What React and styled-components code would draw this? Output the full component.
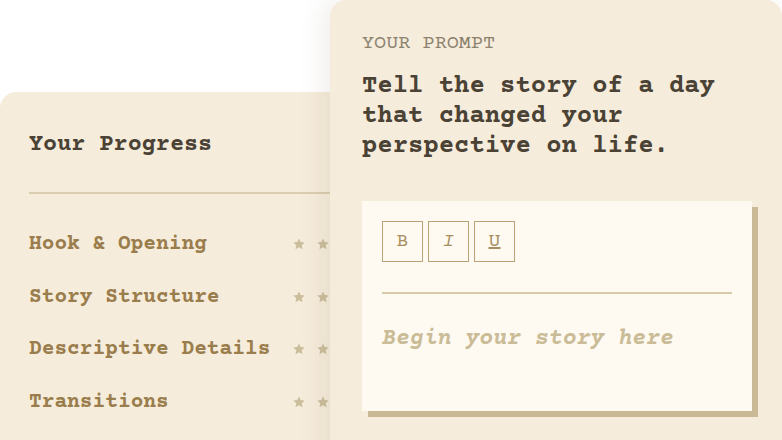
import styled, { createGlobalStyle } from "styled-components";

const GlobalStyle = createGlobalStyle`
  html, body {
    margin: 0;
    padding: 0;
    background: #ffffff;
  }
  body {
    font-family: "Courier Prime", "Courier New", FreeMono, monospace;
    overflow: hidden;
  }
`;

const Stage = styled.div`
  width: 782px;
  height: 440px;
  display: grid;
  grid-template-columns: 330px 452px;
  overflow: hidden;
  background: #ffffff;
`;

const ProgressCard = styled.aside`
  margin-top: 92px;
  width: 420px;
  height: 400px;
  background: #f6ecdb;
  border-radius: 16px 0 0 0;
  padding: 33px 0 0 29px;
  box-sizing: border-box;
`;

const CardTitle = styled.h2`
  margin: 0;
  font-size: 23.5px;
  font-weight: 700;
  color: #4a4235;
  line-height: 40px;
`;

const Divider = styled.div`
  height: 2px;
  background: ${p => p.$color || "#dacdb0"};
  margin: ${p => p.$margin || "0"};
`;

const SkillList = styled.ul`
  list-style: none;
  margin: 0;
  padding: 0;
`;

const SkillRow = styled.li`
  display: grid;
  grid-template-columns: 263px auto;
  align-items: center;
  height: 52.5px;
`;

const SkillName = styled.span`
  font-size: 21.2px;
  font-weight: 700;
  color: #9a7d4c;
`;

const Stars = styled.span`
  display: flex;
  gap: 10px;
  color: #cbbe9c;
`;

const PromptCard = styled.section`
  position: relative;
  z-index: 1;
  background: #f6ecdb;
  border-radius: 16px 16px 0 0;
  padding: 34px 31px 0 32px;
  box-shadow: -6px 0 26px rgba(110, 95, 60, 0.11);
`;

const Label = styled.div`
  font-size: 20.2px;
  color: #8c826f;
  line-height: 20px;
`;

const PromptText = styled.p`
  margin: 18px 0 0;
  font-size: 25.6px;
  font-weight: 700;
  color: #4a4235;
  line-height: 30px;
`;

const Editor = styled.div`
  margin-top: 39px;
  width: 390px;
  height: 210px;
  background: #fffaf1;
  box-shadow: 6px 6px 0 #c9b994;
  padding: 20px 20px 0 20px;
  box-sizing: border-box;
`;

const Toolbar = styled.div`
  display: flex;
  gap: 5px;
`;

const ToolButton = styled.button`
  width: 41px;
  height: 41px;
  background: transparent;
  border: 1.5px solid #b8a276;
  color: #a68e5e;
  font-family: inherit;
  font-size: 20px;
  font-style: ${p => (p.$italic ? "italic" : "normal")};
  text-decoration: ${p => (p.$underline ? "underline" : "none")};
  padding: 0;
`;

const Placeholder = styled.div`
  margin-top: 30px;
  font-size: 23.2px;
  font-style: italic;
  font-weight: 700;
  color: #cbbc98;
  line-height: 30px;
`;

const Star = () => (
  <svg width="14" height="14" viewBox="0 0 24 24" fill="currentColor">
    <path d="M12 2.5l2.9 6.2 6.8.8-5 4.7 1.3 6.7L12 17.6l-6 3.3 1.3-6.7-5-4.7 6.8-.8z" />
  </svg>
);

const skills = ["Hook & Opening", "Story Structure", "Descriptive Details", "Transitions"];

export default function App() {
  return (
    <>
      <GlobalStyle />
      <Stage>
        <div>
          <ProgressCard>
            <CardTitle>Your Progress</CardTitle>
            <Divider $margin="27px 0 24px" />
            <SkillList>
              {skills.map(s => (
                <SkillRow key={s}>
                  <SkillName>{s}</SkillName>
                  <Stars>
                    <Star />
                    <Star />
                    <Star />
                  </Stars>
                </SkillRow>
              ))}
            </SkillList>
          </ProgressCard>
        </div>
        <PromptCard>
          <Label>YOUR PROMPT</Label>
          <PromptText>
            Tell the story of a day that changed your perspective on life.
          </PromptText>
          <Editor>
            <Toolbar>
              <ToolButton>B</ToolButton>
              <ToolButton $italic>I</ToolButton>
              <ToolButton $underline>U</ToolButton>
            </Toolbar>
            <Divider $color="#d8cba9" $margin="30px 0 0" />
            <Placeholder>Begin your story here</Placeholder>
          </Editor>
        </PromptCard>
      </Stage>
    </>
  );
}
